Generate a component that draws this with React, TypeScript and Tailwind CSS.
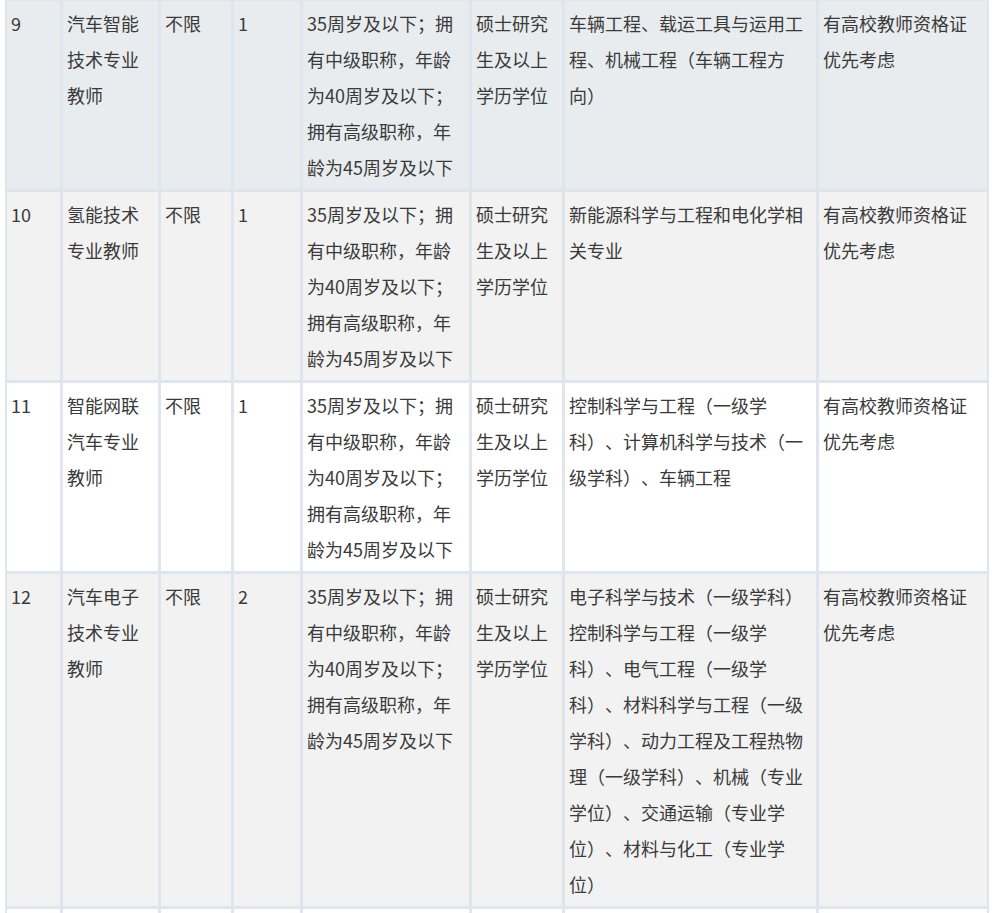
import React from "react";

type Row = {
  no: string;
  post: string;
  major: string;
  count: string;
  age: string;
  edu: string;
  subject: string;
  note: string;
  bg: string;
};

const AGE =
  "35周岁及以下；拥有中级职称，年龄为40周岁及以下；拥有高级职称，年龄为45周岁及以下";
const EDU = "硕士研究生及以上学历学位";
const NOTE = "有高校教师资格证优先考虑";

const rows: Row[] = [
  {
    no: "9",
    post: "汽车智能技术专业教师",
    major: "不限",
    count: "1",
    age: AGE,
    edu: EDU,
    subject: "车辆工程、载运工具与运用工程、机械工程（车辆工程方向）",
    note: NOTE,
    bg: "bg-[#e9ecee]",
  },
  {
    no: "10",
    post: "氢能技术专业教师",
    major: "不限",
    count: "1",
    age: AGE,
    edu: EDU,
    subject: "新能源科学与工程和电化学相关专业",
    note: NOTE,
    bg: "bg-[#f2f2f2]",
  },
  {
    no: "11",
    post: "智能网联汽车专业教师",
    major: "不限",
    count: "1",
    age: AGE,
    edu: EDU,
    subject: "控制科学与工程（一级学科）、计算机科学与技术（一级学科）、车辆工程",
    note: NOTE,
    bg: "bg-white",
  },
  {
    no: "12",
    post: "汽车电子技术专业教师",
    major: "不限",
    count: "2",
    age: AGE,
    edu: EDU,
    subject:
      "电子科学与技术（一级学科）控制科学与工程（一级学科）、电气工程（一级学科）、材料科学与工程（一级学科）、动力工程及工程热物理（一级学科）、机械（专业学位）、交通运输（专业学位）、材料与化工（专业学位）",
    note: NOTE,
    bg: "bg-[#f2f2f2]",
  },
];

function Cell({ bg, children }: { bg: string; children?: React.ReactNode }) {
  return <div className={`${bg} px-1 py-1 break-all`}>{children}</div>;
}

export default function App() {
  return (
    <div className="min-h-[913px] bg-white pl-[5px] overflow-hidden">
      <div
        className="-mt-[2px] grid w-[984px] grid-cols-[53px_95px_70px_66px_166px_90px_251px_168px] gap-[3px] bg-[#dfe5ec] px-[2px] pt-[3px] text-[18px] leading-[36px] text-[#3a3a3a] [text-spacing-trim:space-all]"
        style={{ fontFamily: '"Noto Sans CJK SC", "Noto Sans", sans-serif' }}
      >
        {rows.map((r) => (
          <React.Fragment key={r.no}>
            <Cell bg={r.bg}>{r.no}</Cell>
            <Cell bg={r.bg}>{r.post}</Cell>
            <Cell bg={r.bg}>{r.major}</Cell>
            <Cell bg={r.bg}>{r.count}</Cell>
            <Cell bg={r.bg}>{r.age}</Cell>
            <Cell bg={r.bg}>{r.edu}</Cell>
            <Cell bg={r.bg}>{r.subject}</Cell>
            <Cell bg={r.bg}>{r.note}</Cell>
          </React.Fragment>
        ))}
        {Array.from({ length: 8 }).map((_, i) => (
          <div key={i} className="h-[44px] bg-white" />
        ))}
      </div>
    </div>
  );
}
